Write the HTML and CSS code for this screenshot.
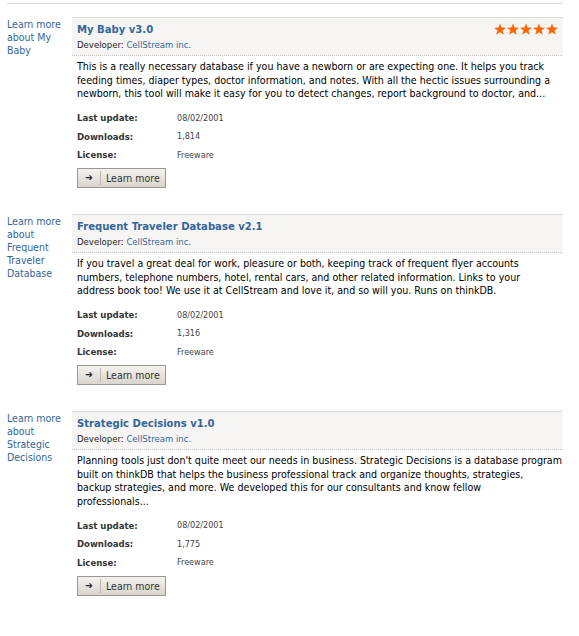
FILE: index.html
```html
<!DOCTYPE html>
<html>
<head>
<meta charset="utf-8">
<link rel="stylesheet" href="styles.css">
</head>
<body>
<div class="page">
  <div class="rule"></div>

  <div class="item">
    <a class="side" href="#">Learn more about My Baby</a>
    <div class="main">
      <div class="head">
        <div class="head-text">
          <div class="title">My Baby v3.0</div>
          <div class="dev">Developer: <a href="#">CellStream inc.</a></div>
        </div>
        <div class="stars">
          <svg width="64" height="13" viewBox="0 0 64 13">
            <g fill="#ff6600">
              <polygon points="6,0.5 7.6,4.6 12,4.7 8.5,7.4 9.8,11.8 6,9.2 2.2,11.8 3.5,7.4 0,4.7 4.4,4.6"/>
              <polygon transform="translate(13 0)" points="6,0.5 7.6,4.6 12,4.7 8.5,7.4 9.8,11.8 6,9.2 2.2,11.8 3.5,7.4 0,4.7 4.4,4.6"/>
              <polygon transform="translate(26 0)" points="6,0.5 7.6,4.6 12,4.7 8.5,7.4 9.8,11.8 6,9.2 2.2,11.8 3.5,7.4 0,4.7 4.4,4.6"/>
              <polygon transform="translate(39 0)" points="6,0.5 7.6,4.6 12,4.7 8.5,7.4 9.8,11.8 6,9.2 2.2,11.8 3.5,7.4 0,4.7 4.4,4.6"/>
              <polygon transform="translate(52 0)" points="6,0.5 7.6,4.6 12,4.7 8.5,7.4 9.8,11.8 6,9.2 2.2,11.8 3.5,7.4 0,4.7 4.4,4.6"/>
            </g>
          </svg>
        </div>
      </div>
      <p class="desc">This is a really necessary database if you have a newborn or are expecting one. It helps you track<br>feeding times, diaper types, doctor information, and notes. With all the hectic issues surrounding a<br>newborn, this tool will make it easy for you to detect changes, report background to doctor, and...</p>
      <div class="meta">
        <span class="label">Last update:</span><span class="value">08/02/2001</span>
        <span class="label">Downloads:</span><span class="value">1,814</span>
        <span class="label">License:</span><span class="value">Freeware</span>
      </div>
      <a class="btn" href="#"><span class="arrow">&#x2794;</span><span class="btn-text">Learn more</span></a>
    </div>
  </div>

  <div class="item">
    <a class="side" href="#">Learn more about Frequent Traveler Database</a>
    <div class="main">
      <div class="head">
        <div class="head-text">
          <div class="title">Frequent Traveler Database v2.1</div>
          <div class="dev">Developer: <a href="#">CellStream inc.</a></div>
        </div>
      </div>
      <p class="desc">If you travel a great deal for work, pleasure or both, keeping track of frequent flyer accounts<br>numbers, telephone numbers, hotel, rental cars, and other related information. Links to your<br>address book too! We use it at CellStream and love it, and so will you. Runs on thinkDB.</p>
      <div class="meta">
        <span class="label">Last update:</span><span class="value">08/02/2001</span>
        <span class="label">Downloads:</span><span class="value">1,316</span>
        <span class="label">License:</span><span class="value">Freeware</span>
      </div>
      <a class="btn" href="#"><span class="arrow">&#x2794;</span><span class="btn-text">Learn more</span></a>
    </div>
  </div>

  <div class="item">
    <a class="side" href="#">Learn more about Strategic Decisions</a>
    <div class="main">
      <div class="head">
        <div class="head-text">
          <div class="title">Strategic Decisions v1.0</div>
          <div class="dev">Developer: <a href="#">CellStream inc.</a></div>
        </div>
      </div>
      <p class="desc">Planning tools just don't quite meet our needs in business. Strategic Decisions is a database program<br>built on thinkDB that helps the business professional track and organize thoughts, strategies,<br>backup strategies, and more. We developed this for our consultants and know fellow<br>professionals...</p>
      <div class="meta">
        <span class="label">Last update:</span><span class="value">08/02/2001</span>
        <span class="label">Downloads:</span><span class="value">1,775</span>
        <span class="label">License:</span><span class="value">Freeware</span>
      </div>
      <a class="btn" href="#"><span class="arrow">&#x2794;</span><span class="btn-text">Learn more</span></a>
    </div>
  </div>
</div>
</body>
</html>
```

FILE: styles.css
```css
html, body {
  margin: 0;
  padding: 0;
  background: #ffffff;
}

body {
  font-family: "DejaVu Sans Condensed", "DejaVu Sans", sans-serif;
  font-size: 10.6px;
  color: #000;
}

a {
  color: #336699;
  text-decoration: none;
}

.page {
  padding: 3px 16px 0 7px;
}

.rule {
  border-top: 1px solid #dddddd;
  margin-bottom: 13px;
}

.item {
  display: flex;
  gap: 7px;
  margin-bottom: 26px;
}

.side {
  width: 58px;
  flex: none;
  font-size: 10.5px;
  line-height: 13px;
  padding-top: 1px;
  color: #336699;
}

.main {
  flex: 1;
  min-width: 0;
}

.head {
  display: flex;
  justify-content: space-between;
  align-items: flex-start;
  background: #f6f5f4;
  border-top: 1px solid #dcdcdc;
  border-bottom: 1px dotted #c8c8c8;
  padding: 4px 5px 3px 5px;
}

.title {
  font-weight: bold;
  font-size: 11.2px;
  line-height: 16px;
  color: #336699;
}

.dev {
  font-size: 9.5px;
  line-height: 14px;
  color: #222;
}

.dev a {
  color: #336699;
}

.stars {
  padding-top: 1px;
}

.stars svg {
  display: block;
}

.desc {
  margin: 4px 0 0 5px;
  line-height: 13.5px;
  white-space: nowrap;
}

.meta {
  display: grid;
  grid-template-columns: 100px auto;
  grid-auto-rows: 18.5px;
  align-items: center;
  margin: 8px 0 0 5px;
}

.label {
  font-weight: bold;
  font-size: 9.5px;
  color: #333;
}

.value {
  font-size: 9px;
  color: #444;
}

.btn {
  display: inline-flex;
  align-items: center;
  margin: 4px 0 0 5px;
  height: 18px;
  border: 1px solid #9a9894;
  background: linear-gradient(#f4f2ee, #d9d5cd);
  color: #333;
  font-size: 10.5px;
}

.arrow {
  width: 22px;
  text-align: center;
  font-size: 10px;
  color: #222;
  border-right: 1px solid #bbb6ad;
  line-height: 14px;
}

.btn-text {
  padding: 0 5px 0 5px;
}
```
